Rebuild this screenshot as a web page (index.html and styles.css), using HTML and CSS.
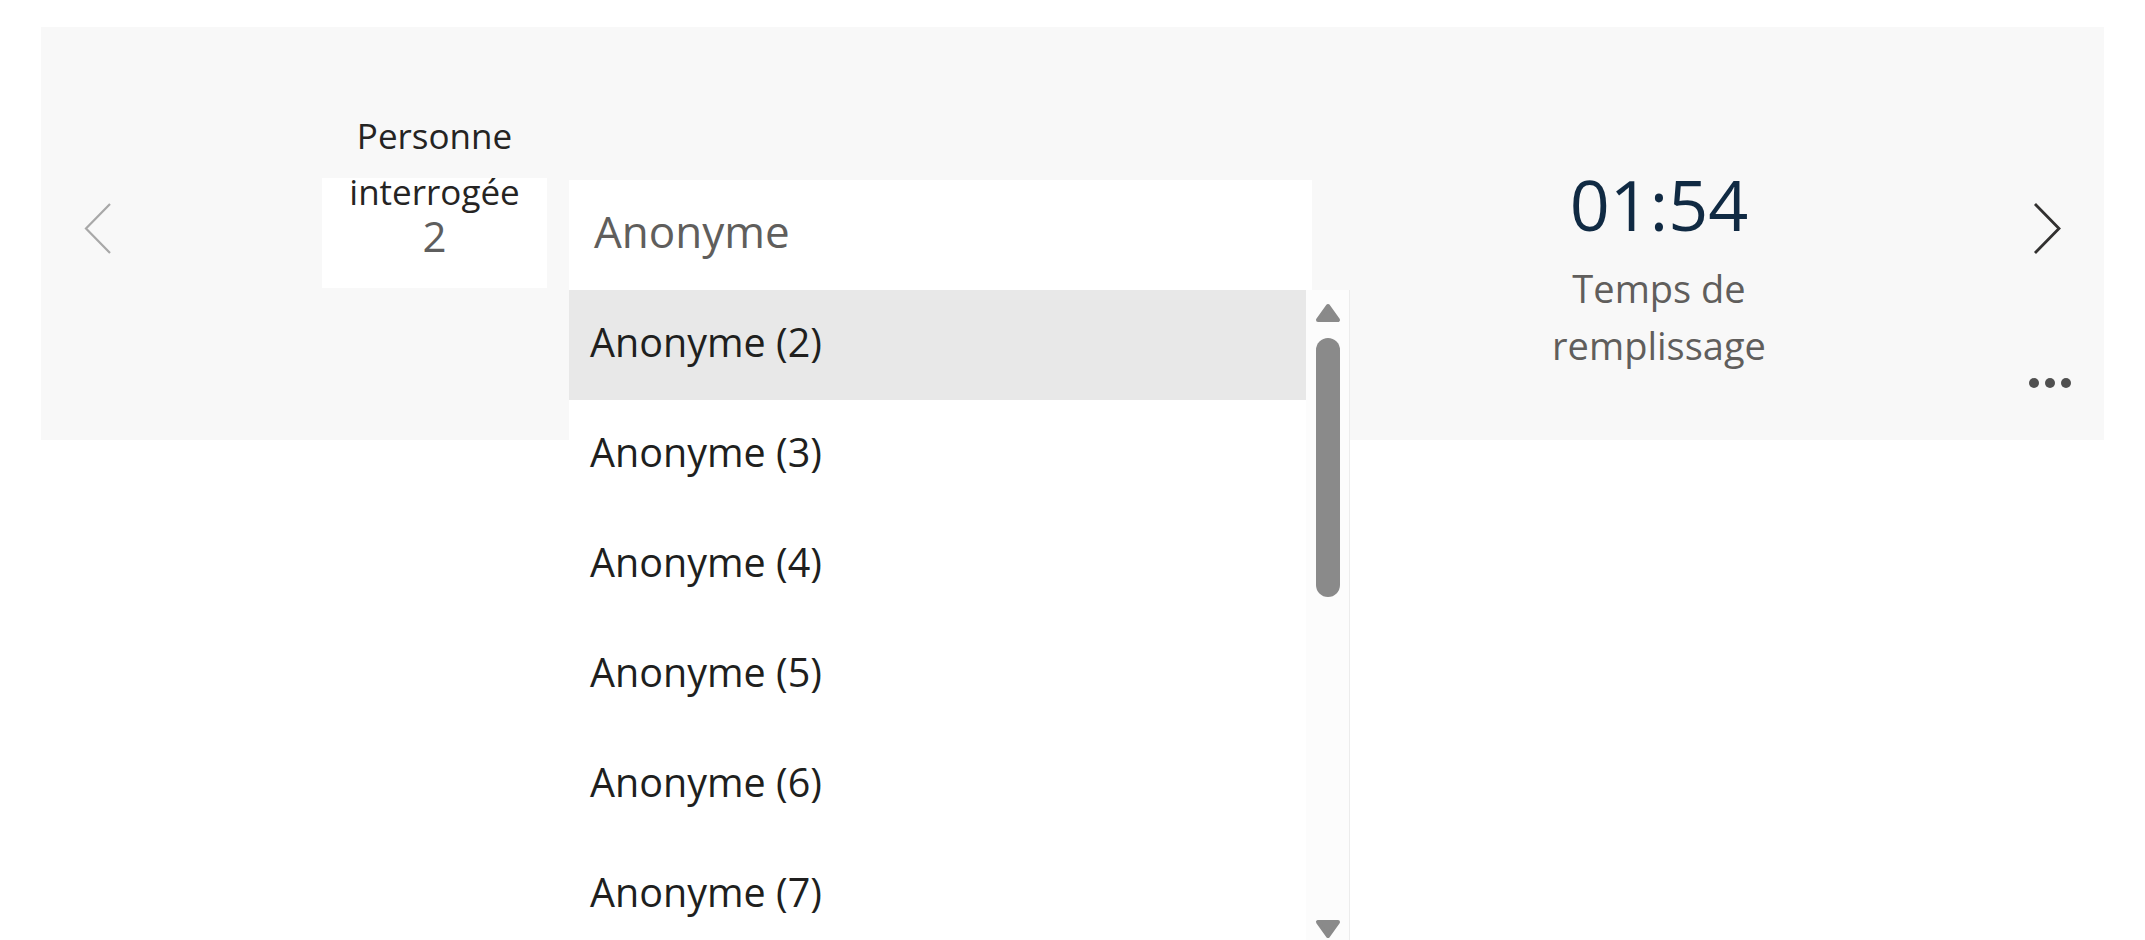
FILE: index.html
```html
<!DOCTYPE html>
<html lang="fr">
<head>
<meta charset="utf-8">
<title>Réponses</title>
<link rel="stylesheet" href="styles.css">
</head>
<body>
<div class="panel">
  <button class="nav nav-prev" aria-label="Précédent">
    <svg width="29" height="53" viewBox="0 0 29 53"><polyline points="27,2 3,26.5 27,51" fill="none" stroke="#a8a8a8" stroke-width="2.2"/></svg>
  </button>
  <div class="respondent">
    <div class="resp-label">Personne interrogée</div>
    <div class="resp-num">2</div>
  </div>
  <div class="picker">
    <div class="picker-input">Anonyme</div>
    <div class="dropdown">
      <div class="options">
        <div class="option active">Anonyme (2)</div>
        <div class="option">Anonyme (3)</div>
        <div class="option">Anonyme (4)</div>
        <div class="option">Anonyme (5)</div>
        <div class="option">Anonyme (6)</div>
        <div class="option">Anonyme (7)</div>
      </div>
      <div class="scrollbar">
        <svg class="sb-arrow sb-up" width="26" height="20" viewBox="0 0 26 20"><polygon points="13,3 23,17 3,17" fill="#8a8a8a" stroke="#8a8a8a" stroke-width="4" stroke-linejoin="round"/></svg>
        <div class="sb-thumb"></div>
        <svg class="sb-arrow sb-down" width="26" height="20" viewBox="0 0 26 20"><polygon points="3,3 23,3 13,17" fill="#8a8a8a" stroke="#8a8a8a" stroke-width="4" stroke-linejoin="round"/></svg>
      </div>
    </div>
  </div>
  <div class="stat">
    <div class="stat-value">01:54</div>
    <div class="stat-label">Temps de remplissage</div>
  </div>
  <div class="side">
    <button class="nav nav-next" aria-label="Suivant">
      <svg width="29" height="53" viewBox="0 0 29 53"><polyline points="2,2 26,26.5 2,51" fill="none" stroke="#323130" stroke-width="2.8"/></svg>
    </button>
    <div class="more"><span></span><span></span><span></span></div>
  </div>
</div>
</body>
</html>
```
FILE: styles.css
```css
html {
  overflow: hidden;
}
body {
  margin: 27px 41px 0;
  min-height: 913px;
  background: #ffffff;
  font-family: "Open Sans", "Noto Sans", sans-serif;
}
.panel {
  display: flex;
  align-items: flex-start;
  height: 413px;
  background: #f8f8f8;
  padding-left: 42px;
}
.nav {
  display: block;
  width: 29px;
  height: 53px;
  padding: 0;
  border: 0;
  background: none;
}
.nav svg {
  display: block;
}
.nav-prev {
  margin-top: 175px;
}
.respondent {
  margin-left: 210px;
  margin-top: 151px;
  width: 225px;
  height: 110px;
  background: #ffffff;
  text-align: center;
}
.resp-label {
  margin-top: -70px;
  font-size: 35px;
  line-height: 56px;
  color: #252423;
}
.resp-num {
  font-size: 42px;
  line-height: 31px;
  color: #5e5e5e;
}
.picker {
  position: relative;
  margin-left: 22px;
  margin-top: 153px;
  width: 743px;
}
.picker-input {
  height: 110px;
  box-sizing: border-box;
  background: #ffffff;
  display: flex;
  align-items: center;
  padding-left: 25px;
  padding-bottom: 8px;
  font-size: 44px;
  color: #605e5c;
}
.dropdown {
  position: absolute;
  top: 110px;
  left: 0;
  width: 780px;
  height: 650px;
  display: flex;
  background: #ffffff;
  overflow: hidden;
  border-right: 1px solid #ececec;
  z-index: 2;
}
.options {
  width: 737px;
}
.option {
  height: 110px;
  box-sizing: border-box;
  display: flex;
  align-items: center;
  padding-left: 21px;
  padding-bottom: 7px;
  font-size: 39.5px;
  color: #201f1e;
}
.option.active {
  background: #e8e8e8;
}
.scrollbar {
  width: 43px;
  display: flex;
  flex-direction: column;
  align-items: center;
  background: #fcfcfc;
}
.sb-arrow {
  display: block;
}
.sb-up {
  margin-top: 13px;
}
.sb-thumb {
  margin-top: 15px;
  width: 24px;
  height: 259px;
  border-radius: 12px;
  background: #8a8a8a;
}
.sb-down {
  margin-top: auto;
  margin-bottom: 1px;
}
.stat {
  margin-left: 197px;
  margin-top: 135px;
  width: 300px;
  text-align: center;
}
.stat-value {
  font-size: 70px;
  line-height: 84px;
  color: #102a43;
}
.stat-label {
  margin-top: 14px;
  font-size: 38px;
  line-height: 57px;
  color: #605e5c;
}
.side {
  margin-left: auto;
  margin-right: 33px;
  margin-top: 175px;
  width: 42px;
  display: flex;
  flex-direction: column;
  align-items: flex-start;
}
.nav-next {
  margin-left: 4px;
}
.more {
  margin-top: 123px;
  display: flex;
  gap: 6px;
}
.more span {
  width: 10px;
  height: 10px;
  border-radius: 50%;
  background: #505050;
}
```
